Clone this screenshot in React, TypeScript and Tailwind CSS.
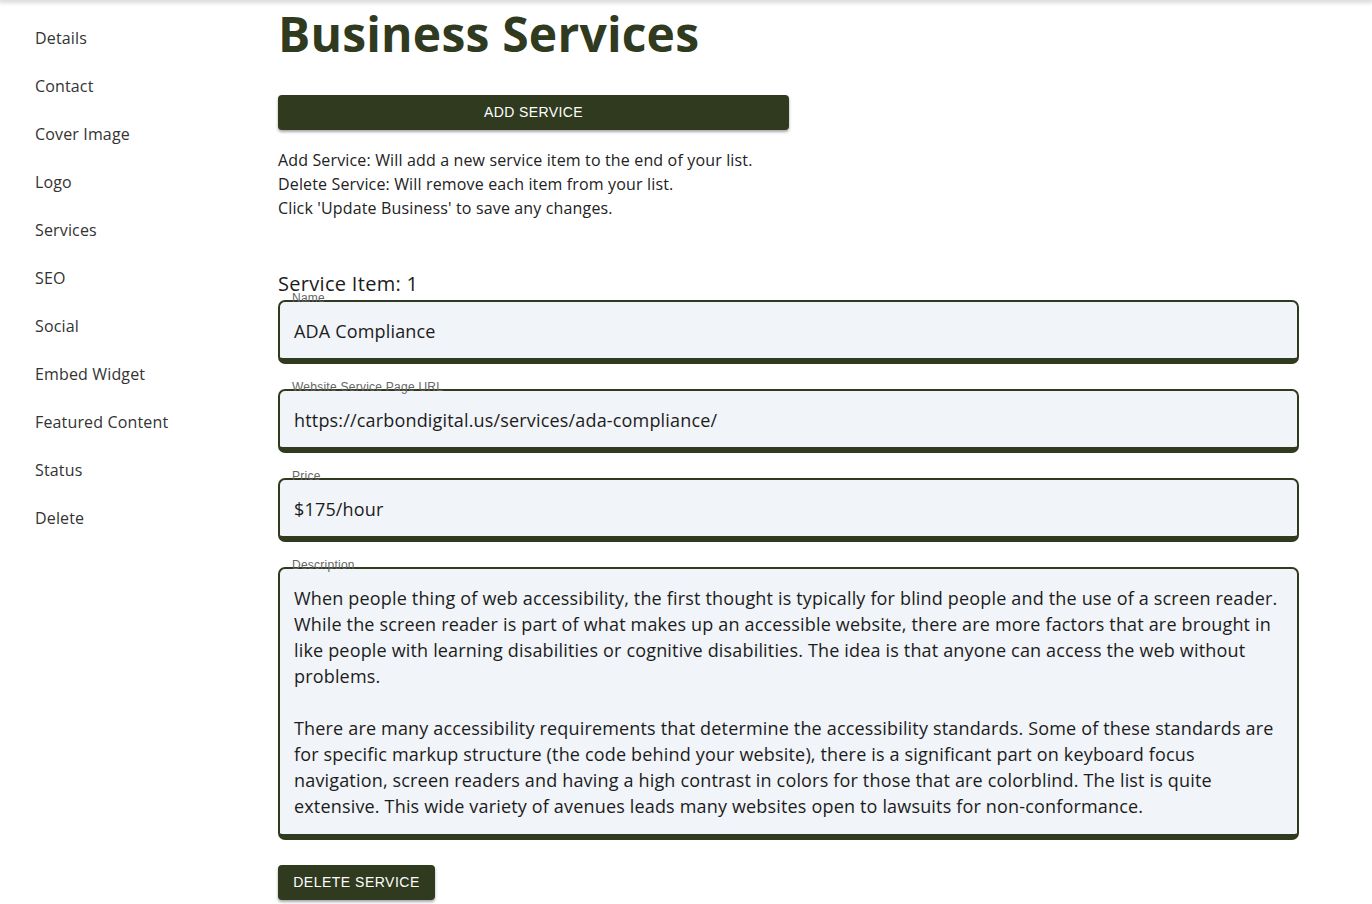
const navItems = [
  "Details",
  "Contact",
  "Cover Image",
  "Logo",
  "Services",
  "SEO",
  "Social",
  "Embed Widget",
  "Featured Content",
  "Status",
  "Delete",
];

const description = [
  "When people thing of web accessibility, the first thought is typically for blind people and the use of a screen reader. While the screen reader is part of what makes up an accessible website, there are more factors that are brought in like people with learning disabilities or cognitive disabilities. The idea is that anyone can access the web without problems.",
  "There are many accessibility requirements that determine the accessibility standards. Some of these standards are for specific markup structure (the code behind your website), there is a significant part on keyboard focus navigation, screen readers and having a high contrast in colors for those that are colorblind. The list is quite extensive. This wide variety of avenues leads many websites open to lawsuits for non-conformance.",
];

function Field({
  label,
  children,
  className = "",
}: {
  label: string;
  children: React.ReactNode;
  className?: string;
}) {
  return (
    <div
      className={`relative rounded-[7px] border-2 border-b-[6px] border-[#2f3a1f] bg-[#f1f4f8] pl-[14px] pr-4 pt-4 pb-[14px] text-[18px] leading-[26px] tracking-[0.17px] text-[#1c1c1c] ${className}`}
    >
      <span className="absolute left-[12px] top-[-10px] font-['Liberation_Sans',Arial,sans-serif] text-[12px] leading-[12px] tracking-[0.25px] text-[#666]">
        {label}
      </span>
      {children}
    </div>
  );
}

export default function App() {
  return (
    <div className="min-h-[904px] bg-white font-['Open_Sans',sans-serif]">
      <div className="h-0 shadow-[0_0_5px_2px_rgba(0,0,0,0.22)]" />
      <div className="flex">
        {/* side nav */}
        <nav className="flex w-[278px] shrink-0 flex-col gap-6 pl-[35px] pt-[26px]">
          {navItems.map((item) => (
            <a key={item} className="text-[16px] leading-6 tracking-[0.15px] text-[#333]">
              {item}
            </a>
          ))}
        </nav>

        <main className="flex-1 pr-[73px] pb-8">
          <h1 className="mt-[10px] text-[48px] font-bold leading-none tracking-[0.2px] text-[#2f3a1f]">
            Business Services
          </h1>

          <button className="mt-[37px] h-[35px] w-[511px] rounded-[4px] bg-[#2f3a1f] font-['Liberation_Sans',Arial,sans-serif] text-[14px] tracking-[0.4px] text-white shadow-[0_2px_3px_rgba(0,0,0,0.35)]">
            ADD SERVICE
          </button>

          <div className="mt-[18px] text-[16px] leading-6 tracking-[0.15px] text-[#222]">
            <p>Add Service: Will add a new service item to the end of your list.</p>
            <p>Delete Service: Will remove each item from your list.</p>
            <p>Click &#39;Update Business&#39; to save any changes.</p>
          </div>

          <h2 className="mt-[50px] text-[20px] leading-7 tracking-[0.3px] text-[#1c1c1c]">
            Service Item: 1
          </h2>

          <div className="mt-[2px] flex flex-col gap-[25px]">
            <Field label="Name">ADA Compliance</Field>
            <Field label="Website Service Page URL">
              https://carbondigital.us/services/ada-compliance/
            </Field>
            <Field label="Price">$175/hour</Field>
            <Field label="Description" className="h-[273px]">
              <p>{description[0]}</p>
              <p className="mt-[26px]">{description[1]}</p>
            </Field>
          </div>

          <button className="mt-[25px] h-[35px] w-[157px] rounded-[4px] bg-[#2f3a1f] font-['Liberation_Sans',Arial,sans-serif] text-[14px] tracking-[0.5px] text-white shadow-[0_2px_3px_rgba(0,0,0,0.35)]">
            DELETE SERVICE
          </button>
        </main>
      </div>
    </div>
  );
}
